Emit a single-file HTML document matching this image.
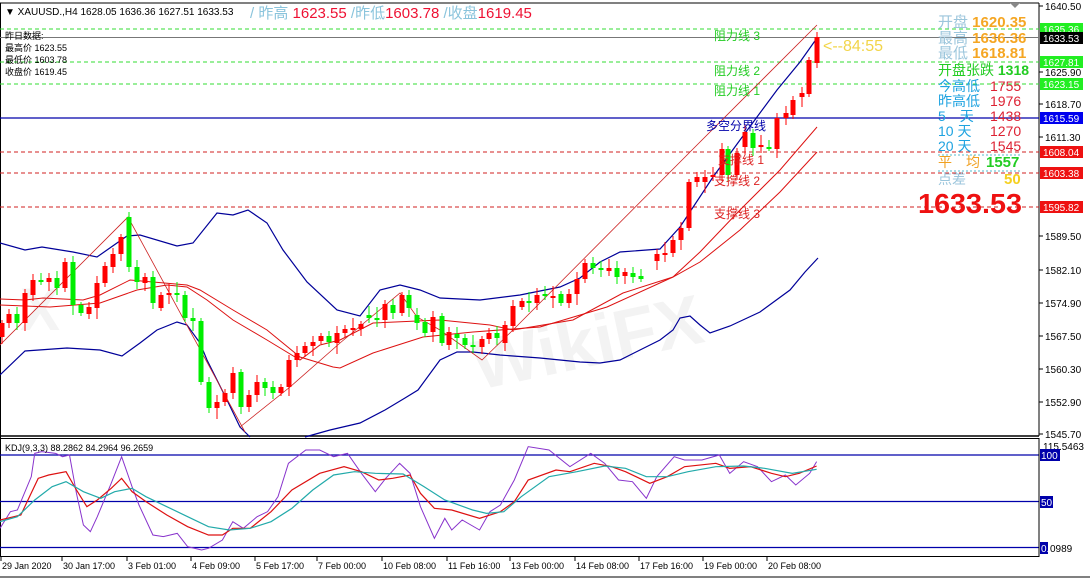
<!DOCTYPE html>
<html><head><meta charset="utf-8">
<style>
html,body{margin:0;padding:0;background:#fff;}
body{width:1090px;height:580px;overflow:hidden;position:relative;font-family:"Liberation Sans","Noto Sans CJK SC",sans-serif;}
svg{position:absolute;left:0;top:0;}
text{font-family:"Liberation Sans","Noto Sans CJK SC",sans-serif;}
</style></head><body>
<svg id="s" width="1090" height="580" xmlns="http://www.w3.org/2000/svg">
<rect x="0" y="0" width="1090" height="580" fill="#fff"/>
<text x="470" y="372" font-size="70" font-weight="bold" fill="#f3f3f3" transform="rotate(-12 560 340)">WikiFX</text>
<text x="20" y="330" font-size="60" font-weight="bold" fill="#f4f4f4">X</text>
<line x1="0" y1="3" x2="1039" y2="3" stroke="#000" stroke-width="1"/>
<line x1="1039" y1="3" x2="1039" y2="436" stroke="#000"/>
<line x1="0.5" y1="3" x2="0.5" y2="556" stroke="#000"/>
<line x1="0" y1="436" x2="1039" y2="436" stroke="#000" stroke-width="1.5"/>
<rect x="0.5" y="438.5" width="1038.5" height="118" fill="none" stroke="#000"/>
<line x1="0" y1="577" x2="1090" y2="577" stroke="#000"/>
<g id="g"></g>
</svg>
<script>
var NS="http://www.w3.org/2000/svg",G=document.getElementById('g');
function el(t,a,txt){var e=document.createElementNS(NS,t);for(var k in a)e.setAttribute(k,a[k]);if(txt!=null)e.textContent=txt;G.appendChild(e);return e;}
function pl(pts,c,w,da){el('polyline',{points:pts.map(function(p){return p.join(',')}).join(' '),fill:'none',stroke:c,'stroke-width':w||1,'stroke-dasharray':da||''});}
function hl(y,c,da,w){el('line',{x1:0,y1:y,x2:1039,y2:y,stroke:c,'stroke-dasharray':da||'','stroke-width':w||1});}
hl(29,'#33dd33','4,3');hl(62,'#33dd33','4,3');hl(84,'#33dd33','4,3');
hl(37.5,'#777');hl(118,'#0000aa','',1.2);
hl(152,'#d02020','4,3');hl(173,'#d02020','4,3');hl(207,'#d02020','4,3');
pl([[0,243],[25,250],[42,247],[73,252],[97,257],[127,236],[140,235],[177,246],[193,243],[217,213],[233,215],[248,210],[267,223],[283,250],[307,282],[337,310],[360,316],[380,290],[400,285],[420,290],[440,298],[480,300],[520,295],[560,287],[580,278],[600,262],[620,252],[660,249],[680,227],[713,177],[740,140],[777,90],[800,62],[817,38]],'#000099',1.2);
pl([[0,375],[25,351],[67,348],[100,350],[122,356],[140,343],[157,330],[177,322],[187,325],[200,343],[207,360],[227,400],[240,427],[250,437]],'#000099',1.2);
pl([[305,437],[330,430],[360,423],[385,410],[405,398],[418,390],[440,360],[457,352],[473,352],[500,355],[540,358],[580,362],[600,363],[620,360],[640,350],[660,340],[673,330],[680,318],[690,316],[700,325],[710,333],[730,326],[760,312],[790,290],[805,272],[818,258]],'#000099',1.2);
pl([[0,299],[25,300],[43,298],[83,300],[100,295],[130,280],[153,282],[187,285],[200,290],[233,310],[267,330],[300,357],[333,367],[340,368],[373,353],[423,337],[473,332],[540,327],[607,307],[673,277],[700,262],[740,230],[780,192],[817,152]],'#dd1111',1);
pl([[0,305],[50,307],[100,303],[137,290],[167,285],[187,287],[207,300],[233,320],[267,340],[300,360],[320,345],[340,340],[373,323],[440,320],[490,325],[513,330],[573,320],[623,293],[673,277],[700,252],[740,210],[780,170],[817,127]],'#dd1111',1);
pl([[0,345],[128,217],[245,432]],'#cc2222',0.8);
pl([[240,427],[290,387],[340,343],[400,293],[417,317],[440,330],[482,360],[513,330],[690,152],[817,25]],'#cc2222',0.8);
var R='#ff0000',Gr='#00ee00';
var C=[[2,323,337,R],[9,314,323,R],[17,314,323,Gr],[25,293,323,R],[33,280,295,R],[41,280,282,Gr],[49,278,282,R],[57,278,288,Gr],[65,262,288,R],[73,262,305,Gr],[81,305,313,Gr],[89,307,314,R],[97,283,308,R],[105,266,283,R],[113,254,267,R],[121,237,254,R],[129,217,267,Gr],[137,267,282,Gr],[145,277,283,R],[153,277,303,Gr],[161,295,308,R],[169,293,295,R],[177,293,295,Gr],[185,295,318,Gr],[193,318,321,Gr],[201,321,382,Gr],[209,382,408,Gr],[217,402,408,R],[225,393,402,R],[233,373,393,R],[241,372,407,Gr],[249,395,407,R],[257,382,395,R],[265,382,388,Gr],[273,387,393,Gr],[281,387,393,R],[289,360,387,R],[297,353,360,R],[305,346,353,R],[313,342,346,R],[321,336,341,R],[329,336,342,Gr],[337,333,343,R],
[345,329,333,R],[353,328,330,R],[361,324,329,R],[369,315,318,Gr],[377,318,320,Gr],[385,304,320,R],[393,305,313,Gr],[402,295,313,R],[409,295,308,Gr],[417,315,323,Gr],[425,322,333,Gr],[433,317,332,R],[442,316,343,Gr],[449,332,345,R],[457,334,338,Gr],[465,338,345,Gr],[473,345,347,Gr],[482,339,347,R],[489,333,339,R],[497,333,338,Gr],[505,325,343,R],[513,306,326,R],[522,301,307,R],[529,301,303,Gr],[537,295,303,R],[545,294,296,Gr],[553,296,298,R],[561,294,303,Gr],[569,294,303,R],[577,279,294,R],[585,263,279,R],[593,263,268,Gr],[601,268,270,Gr],[609,268,271,R],[617,268,277,Gr],[625,272,276,R],[633,273,277,Gr],[641,276,279,Gr],[657,254,261,R],[665,253,255,R],[673,240,253,R],[681,228,240,R],[689,182,228,R],[697,177,182,R],[705,177,182,R],[713,175,177,R],[722,149,175,R],[728,149,175,Gr],[737,153,175,R],[745,132,147,R],[753,133,148,Gr],[761,145,147,R],[769,147,148,Gr],[777,118,149,R],[786,113,118,R],[793,100,115,R],[802,93,97,R],[809,60,94,R],[817,37,63,R]];
C.forEach(function(c,i){var h=c[2]-c[1];var wk=3+(i*7%5);
el('line',{x1:c[0],y1:c[1]-wk-(h<4?4:0),x2:c[0],y2:c[2]+wk+(i%3==0?4:0),stroke:c[3],'stroke-width':1});
el('rect',{x:c[0]-2.5,y:c[1],width:5,height:Math.max(h,2),fill:c[3]});});
function kl(y){el('line',{x1:0,y1:y,x2:1039,y2:y,stroke:'#0000aa','stroke-width':1.3});}
kl(455);kl(501.5);kl(547.5);
function K(a){return a.map(function(p){return [p[0]*0.695,430+p[1]/3];});}
pl(K([[0,295],[15,245],[25,240],[45,140],[50,70],[60,65],[80,70],[90,80],[100,75],[110,190],[120,285],[130,305],[140,260],[160,160],[175,80],[190,170],[200,225],[220,315],[235,320],[255,310],[270,350],[290,360],[300,355],[320,330],[335,275],[350,295],[370,260],[385,245],[400,200],[415,100],[440,60],[460,60],[480,80],[500,70],[520,130],[540,185],[555,145],[575,100],[590,130],[605,230],[625,325],[640,265],[650,300],[665,270],[690,300],[705,245],[720,225],[740,150],[760,50],[790,60],[820,110],[850,70],[870,100],[890,150],[910,155],[930,205],[945,140],[970,80],[985,90],[1010,90],[1035,75],[1050,130],[1070,95],[1090,110],[1110,155],[1130,135],[1145,165],[1165,130],[1175,95]]),'#8833cc',1);
pl(K([[0,270],[20,260],[30,255],[55,145],[70,135],[95,125],[110,180],[125,230],[140,210],[160,175],[175,145],[190,185],[210,215],[240,255],[270,290],[300,315],[320,315],[335,295],[360,295],[390,245],[420,180],[460,130],[495,110],[520,125],[545,150],[565,145],[590,135],[605,190],[625,235],[650,240],[690,265],[720,245],[740,215],[760,150],[800,120],[820,125],[855,100],[880,110],[900,125],[935,160],[960,140],[985,110],[1030,100],[1050,115],[1080,110],[1110,130],[1130,140],[1150,130],[1175,108]]),'#dd1111',1.2);
pl(K([[0,275],[25,260],[50,210],[75,170],[95,155],[120,185],[145,205],[165,185],[190,175],[210,200],[240,230],[270,260],[300,290],[330,300],[360,295],[390,275],[420,235],[450,180],[480,135],[510,125],[540,130],[580,132],[610,170],[640,210],[680,240],[700,250],[725,245],[750,200],[790,140],[830,125],[870,108],[900,115],[930,140],[960,140],[990,125],[1030,110],[1070,108],[1100,115],[1140,130],[1175,118]]),'#22aaaa',1.2);
var T=[[2,'29 Jan 2020'],[63,'30 Jan 17:00'],[128,'3 Feb 01:00'],[192,'4 Feb 09:00'],[256,'5 Feb 17:00'],[318,'7 Feb 00:00'],[383,'10 Feb 08:00'],[448,'11 Feb 16:00'],[511,'13 Feb 00:00'],[576,'14 Feb 08:00'],[640,'17 Feb 16:00'],[704,'19 Feb 00:00'],[768,'20 Feb 08:00']];
T.forEach(function(t){el('line',{x1:t[0]-1,y1:557,x2:t[0]-1,y2:561,stroke:'#000'});el('text',{x:t[0],y:569,'font-size':9,fill:'#000'},t[1]);});
el('line',{x1:1039,y1:438,x2:1039,y2:557,stroke:'#000'});
var A=[[6,'1640.50'],[72,'1625.90'],[104,'1618.70'],[137,'1611.30'],[236,'1589.50'],[270,'1582.10'],[303,'1574.90'],[336,'1567.50'],[369,'1560.30'],[402,'1552.90'],[434,'1545.70']];
A.forEach(function(a){el('line',{x1:1039,y1:a[0],x2:1043,y2:a[0],stroke:'#000'});el('text',{x:1045,y:a[0]+4,'font-size':10,fill:'#000'},a[1]);});
var B=[[29,'1635.36','#22ee22','#fff'],[38,'1633.53','#000','#fff'],[62,'1627.81','#22ee22','#fff'],[84,'1623.15','#22ee22','#fff'],[118,'1615.59','#0000ee','#fff'],[152,'1608.04','#ee1111','#fff'],[173,'1603.38','#ee1111','#fff'],[207,'1595.82','#ee1111','#fff']];
B.forEach(function(b){el('rect',{x:1040,y:b[0]-6,width:43,height:12,fill:b[2]});el('text',{x:1043,y:b[0]+4,'font-size':10,fill:b[3]},b[1]);});
el('text',{x:1043,y:450,'font-size':10,fill:'#000'},'115.5463');
[[455,'100',20],[502,'50',13],[548,'0.0',8]].forEach(function(b){el('rect',{x:1040,y:b[0]-6,width:b[2],height:12,fill:'#0000aa'});el('text',{x:1041,y:b[0]+4,'font-size':10,fill:'#fff'},b[1]);});
el('text',{x:1050,y:552,'font-size':10,fill:'#000'},'0989');
el('polygon',{points:'1010,3 1020,3 1015,8',fill:'#888'});
</script>
<svg width="1090" height="580" xmlns="http://www.w3.org/2000/svg" style="pointer-events:none">
<text x="5" y="15" font-size="10" fill="#000">▼ XAUUSD.,H4  1628.05 1636.36 1627.51 1633.53</text>
<text x="250" y="18" font-size="15" fill="#8ac4dc">/ 昨高 <tspan fill="#ee1133">1623.55</tspan> /昨低<tspan fill="#ee1133">1603.78</tspan> /收盘<tspan fill="#ee1133">1619.45</tspan></text>
<g font-size="9" fill="#000">
<text x="5" y="39">昨日数据:</text>
<text x="5" y="51">最高价 1623.55</text>
<text x="5" y="63">最低价 1603.78</text>
<text x="5" y="75">收盘价 1619.45</text>
</g>
<text x="5" y="451" font-size="9" fill="#000">KDJ(9,3,3) 88.2862 84.2964 96.2659</text>
<g font-size="12" fill="#22cc22">
<text x="714" y="40">阻力线 3</text>
<text x="714" y="75">阻力线 2</text>
<text x="714" y="95">阻力线 1</text>
</g>
<text x="706" y="130" font-size="12" fill="#0000aa">多空分界线</text>
<g font-size="12" fill="#dd2222">
<text x="718" y="164">支撑线 1</text>
<text x="714" y="185">支撑线 2</text>
<text x="714" y="218">支撑线 3</text>
</g>
<text x="823" y="51" font-size="16" fill="#f2d54a">&lt;--84:55</text>
<g font-size="15" font-weight="bold">
<text x="938" y="27" fill="#9cc6dc" font-weight="normal">开盘 <tspan fill="#f5a623" font-weight="bold">1620.35</tspan></text>
<text x="938" y="43" fill="#9cc6dc" font-weight="normal">最高 <tspan fill="#f5a623" font-weight="bold">1636.36</tspan></text>
<text x="938" y="58" fill="#9cc6dc" font-weight="normal">最低 <tspan fill="#f5a623" font-weight="bold">1618.81</tspan></text>
<text x="938" y="75" fill="#22cc22" font-weight="normal" font-size="14">开盘张跌 <tspan font-weight="bold">1318</tspan></text>
</g>
<g font-size="14">
<text x="938" y="91" fill="#1fa3e0">今高低</text><text x="990" y="91" fill="#dd2233">1755</text>
<text x="938" y="106" fill="#1fa3e0">昨高低</text><text x="990" y="106" fill="#dd2233">1976</text>
<text x="938" y="121" fill="#1fa3e0">5　天</text><text x="990" y="121" fill="#dd2233">1438</text>
<text x="938" y="136" fill="#1fa3e0">10 天</text><text x="990" y="136" fill="#dd2233">1270</text>
<text x="938" y="151" fill="#1fa3e0">20 天</text><text x="990" y="151" fill="#dd2233">1545</text>
<text x="938" y="167" fill="#f0a020">平　均</text><text x="986" y="167" fill="#22cc22" font-weight="bold" font-size="15">1557</text>
<text x="938" y="184" fill="#9cc6dc">点差</text><text x="1004" y="184" fill="#f5d020" font-weight="bold" font-size="15">50</text>
</g>
<line x1="938" y1="155" x2="1022" y2="155" stroke="#5bc" stroke-dasharray="2,2"/>
<line x1="938" y1="171" x2="1022" y2="171" stroke="#5bc" stroke-dasharray="2,2"/>
<text x="918" y="213" font-size="28" font-weight="bold" fill="#ee1111" textLength="104" lengthAdjust="spacingAndGlyphs">1633.53</text>
</svg>
</body></html>
